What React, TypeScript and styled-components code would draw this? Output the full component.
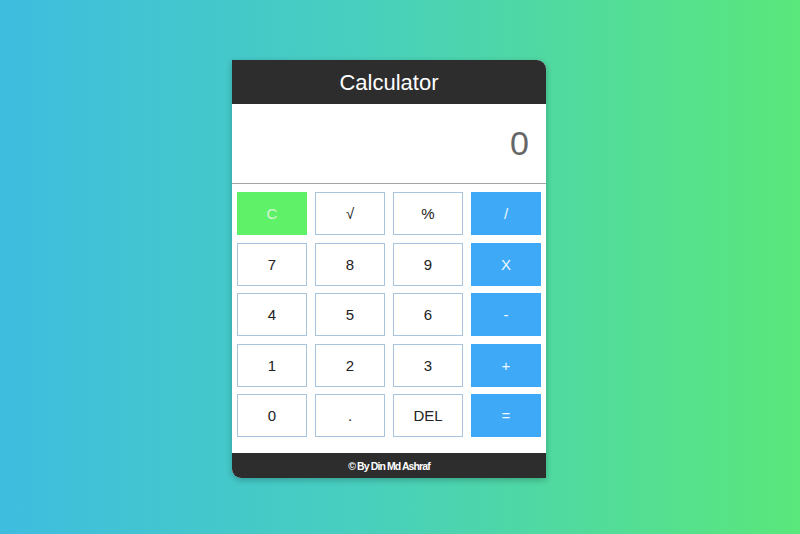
import React from "react";
import styled, { createGlobalStyle, css } from "styled-components";

const Global = createGlobalStyle`
  html, body { margin: 0; padding: 0; }
  body {
    width: 800px;
    height: 534px;
    overflow: hidden;
    background: linear-gradient(to right, #3ebddf 0%, #48cfbe 45%, #5ae77b 100%);
    font-family: "Liberation Sans", Arial, sans-serif;
  }
`;

const Page = styled.div`
  display: flex;
  justify-content: center;
  padding: 60px 22px 0 0;
  box-sizing: border-box;
  height: 534px;
`;

const Card = styled.div`
  width: 314px;
  height: 418px;
  display: flex;
  flex-direction: column;
  background: #ffffff;
  border-radius: 0 9px 0 9px;
  overflow: hidden;
  box-shadow: 0 2px 6px rgba(0, 0, 0, 0.25);
`;

const Header = styled.div`
  height: 44px;
  background: #2d2d2d;
  color: #ffffff;
  font-size: 22px;
  display: flex;
  align-items: center;
  justify-content: center;
  padding-top: 1px;
  box-sizing: border-box;
`;

const Display = styled.div`
  height: 79px;
  border-bottom: 1px solid #a5a5a5;
  display: flex;
  align-items: center;
  justify-content: flex-end;
  padding-right: 17px;
  font-size: 34px;
  color: #666666;
`;

const Keys = styled.div`
  flex: 1;
  display: grid;
  grid-template-columns: repeat(4, 70px);
  grid-auto-rows: 43px;
  column-gap: 8px;
  row-gap: 7.5px;
  padding: 8px 5px 0 5px;
  align-content: start;
`;

type Kind = "num" | "clear" | "op";

const Key = styled.button<{ $kind: Kind }>`
  font-family: "Liberation Sans", Arial, sans-serif;
  font-size: 15px;
  border: 1px solid #a9c5dd;
  background: #ffffff;
  color: #222222;
  padding: 0;
  display: flex;
  align-items: center;
  justify-content: center;
  ${(p) =>
    p.$kind === "clear" &&
    css`
      background: #5ff268;
      border-color: #5ff268;
      color: #d6f5d8;
    `}
  ${(p) =>
    p.$kind === "op" &&
    css`
      background: #3da9f7;
      border-color: #3da9f7;
      color: #f2f8ff;
    `}
`;

const Footer = styled.div`
  height: 25px;
  background: #2d2d2d;
  color: #ffffff;
  font-size: 10.5px;
  font-weight: bold;
  letter-spacing: -0.9px;
  display: flex;
  align-items: center;
  justify-content: center;
`;

const keys: { label: string; kind: Kind }[] = [
  { label: "C", kind: "clear" },
  { label: "√", kind: "num" },
  { label: "%", kind: "num" },
  { label: "/", kind: "op" },
  { label: "7", kind: "num" },
  { label: "8", kind: "num" },
  { label: "9", kind: "num" },
  { label: "X", kind: "op" },
  { label: "4", kind: "num" },
  { label: "5", kind: "num" },
  { label: "6", kind: "num" },
  { label: "-", kind: "op" },
  { label: "1", kind: "num" },
  { label: "2", kind: "num" },
  { label: "3", kind: "num" },
  { label: "+", kind: "op" },
  { label: "0", kind: "num" },
  { label: ".", kind: "num" },
  { label: "DEL", kind: "num" },
  { label: "=", kind: "op" },
];

export default function App() {
  return (
    <>
      <Global />
      <Page>
        <Card>
          <Header>Calculator</Header>
          <Display>0</Display>
          <Keys>
            {keys.map((k) => (
              <Key key={k.label} $kind={k.kind}>
                {k.label}
              </Key>
            ))}
          </Keys>
          <Footer>© By Din Md Ashraf</Footer>
        </Card>
      </Page>
    </>
  );
}
